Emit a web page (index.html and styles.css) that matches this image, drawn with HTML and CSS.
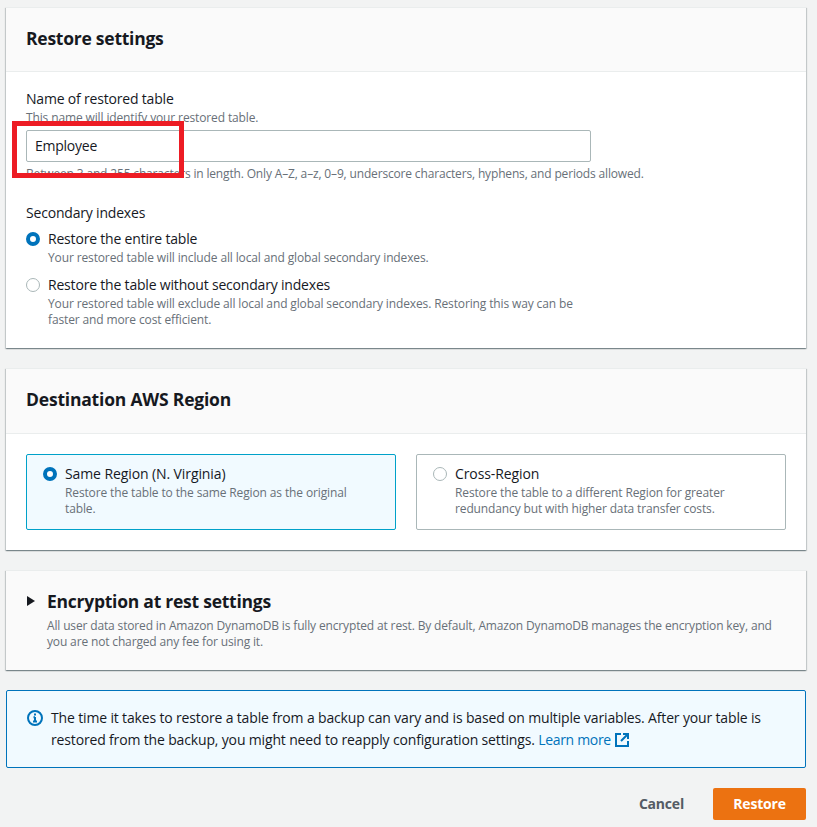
FILE: index.html
```html
<!DOCTYPE html>
<html lang="en">
<head>
<meta charset="utf-8">
<title>Restore table</title>
<link rel="stylesheet" href="styles.css">
</head>
<body>
<main class="page">
  <section class="panel panel-settings">
    <header class="panel-head"><h2>Restore settings</h2></header>
    <div class="panel-body body-settings">
      <div class="field">
        <div class="label">Name of restored table</div>
        <div class="desc">This name will identify your restored table.</div>
        <div class="input">Employee</div>
        <div class="desc constraint">Between 3 and 255 characters in length. Only A–Z, a–z, 0–9, underscore characters, hyphens, and periods allowed.</div>
      </div>
      <div class="label group-label">Secondary indexes</div>
      <div class="radio-row">
        <span class="radio checked"></span>
        <div><div class="label">Restore the entire table</div>
        <div class="desc">Your restored table will include all local and global secondary indexes.</div></div>
      </div>
      <div class="radio-row second">
        <span class="radio"></span>
        <div class="narrow"><div class="label">Restore the table without secondary indexes</div>
        <div class="desc">Your restored table will exclude all local and global secondary indexes. Restoring this way can be faster and more cost efficient.</div></div>
      </div>
    </div>
    <div class="highlight"></div>
  </section>

  <section class="panel panel-region">
    <header class="panel-head"><h2>Destination AWS Region</h2></header>
    <div class="panel-body tiles">
      <div class="tile selected">
        <span class="radio checked"></span>
        <div><div class="label">Same Region (N. Virginia)</div>
        <div class="desc">Restore the table to the same Region as the original table.</div></div>
      </div>
      <div class="tile">
        <span class="radio"></span>
        <div><div class="label">Cross-Region</div>
        <div class="desc">Restore the table to a different Region for greater redundancy but with higher data transfer costs.</div></div>
      </div>
    </div>
  </section>

  <section class="panel panel-encryption">
    <div class="exp-title">
      <svg class="caret" width="8" height="10" viewBox="0 0 8 10"><path d="M0 0 8 5 0 10z" fill="#16191f"/></svg>
      <h2>Encryption at rest settings</h2>
    </div>
    <div class="desc exp-desc">All user data stored in Amazon DynamoDB is fully encrypted at rest. By default, Amazon DynamoDB manages the encryption key, and you are not charged any fee for using it.</div>
  </section>

  <section class="alert">
    <svg class="info" width="16" height="16" viewBox="0 0 16 16" fill="none" stroke="#0073bb" stroke-width="2"><circle cx="8" cy="8" r="7"/><path d="M8 7v4.500M6 11.500h4M6.500 7.200H8"/><path d="M8 3.500v2"/></svg>
    <p>The time it takes to restore a table from a backup can vary and is based on multiple variables. After your table is restored from the backup, you might need to reapply configuration settings. <a href="#">Learn more</a><svg class="ext" width="14" height="14" viewBox="0 0 14 14" fill="none" stroke="#0073bb" stroke-width="2"><path d="M6 1H1v12h12V8"/><path d="M8 1h5v5M13 1 6 8"/></svg></p>
  </section>

  <footer class="actions">
    <span class="cancel">Cancel</span>
    <span class="primary">Restore</span>
  </footer>
</main>
</body>
</html>
```
FILE: styles.css
```css
* { box-sizing: border-box; }
html, body { margin: 0; padding: 0; }
body {
  background: #f2f3f3;
  color: #16191f;
  font-family: "Open Sans", "Noto Sans", sans-serif;
  font-size: 14px;
  line-height: 16px;
  width: 817px;
  height: 827px;
  overflow: hidden;
}
.page { padding: 7px 11px 0 6px; }
.panel {
  position: relative;
  background: #fff;
  border-top: 1px solid #eaeded;
  box-shadow: 0 1px 1px 0 rgba(0,28,36,.3), 1px 1px 1px 0 rgba(0,28,36,.15), -1px 1px 1px 0 rgba(0,28,36,.15);
}
.panel-settings { height: 341px; }
.panel-region { height: 182px; margin-top: 20px; }
.panel-encryption { height: 100px; margin-top: 20px; background: #fafafa; padding: 19px 20px 0; }
.panel-head {
  height: 64px;
  background: #fafafa;
  border-bottom: 1px solid #eaeded;
  padding: 0 20px 4px;
  display: flex;
  align-items: center;
}
.panel-region .panel-head { height: 65px; padding-bottom: 5px; }
h2 { margin: 0; font-size: 17.500px; line-height: 22px; font-weight: 700; letter-spacing: -.25px; }
.panel-region h2 { letter-spacing: -.2px; }
.panel-body { padding: 20px; }
.body-settings { padding-top: 18px; }
.label { font-size: 14px; line-height: 17px; letter-spacing: -.19px; }
.desc { font-size: 12px; line-height: 16px; color: #687078; letter-spacing: -.13px; margin-top: 3px; }
.input {
  margin-top: 4px;
  width: 565px;
  height: 32px;
  border: 1px solid #aab7b8;
  border-radius: 2px;
  background: #fff;
  padding: 0 8px;
  display: flex;
  align-items: center;
  letter-spacing: -.25px;
}
.constraint { margin-top: 4px; letter-spacing: -.16px; }
.group-label { margin-top: 22px; }
.radio-row { display: flex; gap: 8px; margin-top: 9px; width: 560px; }
.radio-row.second { margin-top: 10px; }
.radio {
  flex: none;
  width: 14px;
  height: 14px;
  border-radius: 50%;
  border: 1px solid #aab7b8;
  background: #fff;
  margin-top: 2px;
}
.radio.checked { border: 4px solid #0073bb; }
.highlight {
  position: absolute;
  left: 6px;
  top: 113px;
  width: 172px;
  height: 57px;
  border: 5px solid #ed1c24;
}
.tiles { display: flex; gap: 20px; padding-top: 20px; }
.tile {
  flex: 1;
  height: 76px;
  display: flex;
  gap: 8px;
  border: 1px solid #aab7b8;
  border-radius: 2px;
  padding: 10px 24px 10px 16px;
}
.tile .label { letter-spacing: -.1px; }
.tile.selected { background: #f1faff; border-color: #00a1c9; }
.exp-title { display: flex; align-items: center; gap: 12px; }
.caret { flex: none; margin-left: 1px; }
.exp-desc { margin: 6px 0 0 21px; letter-spacing: -.15px; }
.alert {
  margin-top: 20px;
  height: 78px;
  background: #f1faff;
  border: 1px solid #0073bb;
  border-radius: 2px;
  padding: 16px 20px 0 20px;
  display: flex;
  gap: 8px;
}
.info { flex: none; margin-top: 3px; }
.alert p { margin: 0; line-height: 22px; letter-spacing: -.155px; }
.alert a { color: #0073bb; text-decoration: none; letter-spacing: -.33px; }
.ext { vertical-align: -2px; margin-left: 4px; }
.actions {
  display: flex;
  justify-content: flex-end;
  align-items: center;
  margin-top: 20px;
  gap: 29px;
}
.cancel { color: #545b64; font-weight: 700; letter-spacing: -.2px; }
.primary {
  width: 93px;
  height: 32px;
  background: #ec7211;
  color: #fff;
  font-weight: 700;
  border-radius: 2px;
  display: flex;
  align-items: center;
  justify-content: center;
  letter-spacing: -.2px;
}
```
